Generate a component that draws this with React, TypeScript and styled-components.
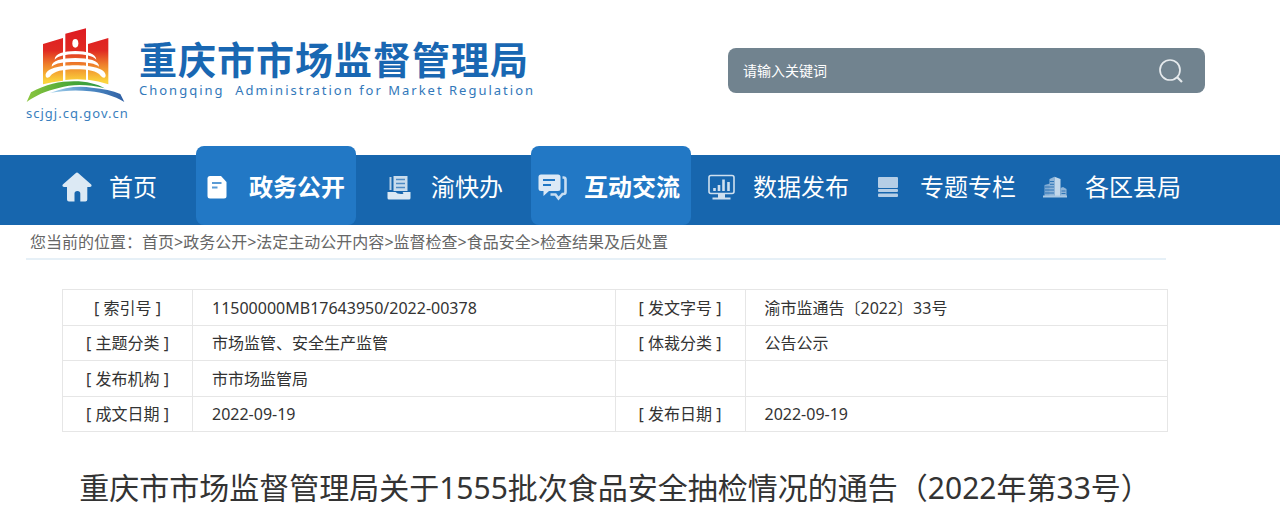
import React from "react";
import styled, { createGlobalStyle, css } from "styled-components";

const sans = `"Noto Sans", "Noto Sans CJK SC", sans-serif`;

const GlobalStyle = createGlobalStyle`
  * { box-sizing: border-box; }
  body {
    margin: 0;
    background: #fff;
    color: #333;
    font-family: ${sans};
    font-size: 16px;
    overflow-x: hidden;
  }
`;

const Header = styled.header`
  display: flex;
  justify-content: space-between;
  align-items: flex-start;
  min-height: 155px;
  padding: 28px 75px 24px 26px;
`;

const Brand = styled.a`
  display: flex;
  gap: 12px;
  color: #1967b2;
  text-decoration: none;
`;

const Emblem = styled.div`
  display: flex;
  flex-direction: column;
  width: 101px;
`;

const SiteAddress = styled.span`
  font-size: 13px;
  line-height: 20px;
  letter-spacing: 1px;
  color: #3a7fbe;
  white-space: nowrap;
`;

const BrandText = styled.div`
  display: flex;
  flex-direction: column;
  padding-top: 8px;
`;

const BrandName = styled.span`
  font-size: 38px;
  line-height: 46px;
  font-weight: 700;
  letter-spacing: 1px;
  white-space: nowrap;
`;

const BrandEnglish = styled.span`
  font-size: 13px;
  line-height: 16px;
  letter-spacing: 2px;
  color: #3278ba;
  white-space: pre;
`;

const SearchForm = styled.form`
  display: flex;
  align-items: center;
  width: 477px;
  height: 45px;
  margin-top: 20px;
  padding: 0 21px 0 15px;
  border-radius: 8px;
  background: #71838f;
`;

const SearchInput = styled.input`
  flex: 1;
  min-width: 0;
  padding: 0;
  border: 0;
  outline: 0;
  background: transparent;
  color: #fff;
  font: 14px ${sans};
  &::placeholder {
    color: #fff;
    opacity: 1;
  }
`;

const SearchButton = styled.button`
  display: flex;
  padding: 0;
  border: 0;
  background: transparent;
  color: #e6eaed;
  cursor: pointer;
`;

const NavBar = styled.nav`
  background: #1766ae;
`;

const NavList = styled.ul`
  display: grid;
  grid-template-columns: 140fr 182fr 153fr 169fr 167fr 168fr 245fr;
  margin: 0;
  padding: 0 0 0 56px;
  list-style: none;
`;

const NavItem = styled.li`
  display: flex;
`;

const NavLink = styled.a<{ $active?: boolean }>`
  display: flex;
  align-items: center;
  gap: 17px;
  height: 79px;
  margin-top: -9px;
  padding: 9px 8px 6px 6px;
  border-radius: 8px;
  color: #fff;
  font-size: 24px;
  text-decoration: none;
  white-space: nowrap;
  ${(p) =>
    p.$active &&
    css`
      background: #2278c5;
      font-weight: 700;
      padding-right: 11px;
    `}
`;

const IconSlot = styled.span<{ $narrow?: boolean }>`
  display: flex;
  justify-content: center;
  width: ${(p) => (p.$narrow ? "27px" : "30px")};
`;

const NavLabel = styled.span`
  padding-bottom: 4px;
`;

const Breadcrumb = styled.nav`
  margin: 0 114px 0 26px;
  padding: 5px 4px 4px;
  border-bottom: 2px solid #e6f0f7;
  color: #666;
  line-height: 24px;
  white-space: nowrap;
`;

const CrumbLink = styled.a`
  color: inherit;
  text-decoration: none;
`;

const Article = styled.main`
  margin: 29px 112px 0 62px;
`;

const InfoTable = styled.table`
  width: 100%;
  height: 143px;
  table-layout: fixed;
  border-collapse: collapse;
`;

const LabelCol = styled.col`
  width: 130px;
`;

const cell = css`
  height: 35px;
  border: 1px solid #e6e6e6;
  line-height: 24px;
  font-weight: 400;
`;

const LabelCell = styled.th`
  ${cell}
  padding: 1px 0 0;
  text-align: center;
`;

const ValueCell = styled.td`
  ${cell}
  padding: 1px 19px 0;
`;

const Title = styled.h1`
  display: flex;
  justify-content: center;
  margin: 34px 0 0;
  font-size: 30px;
  line-height: 44px;
  font-weight: 400;
  white-space: nowrap;
`;

const LogoMark = () => (
  <svg width="100" height="75" viewBox="48 24 300 225" aria-hidden="true">
    <defs>
      <linearGradient id="tower" gradientUnits="userSpaceOnUse" x1="0" y1="25" x2="0" y2="192">
        <stop offset="0" stopColor="#de1b22" />
        <stop offset="0.4" stopColor="#e02a22" />
        <stop offset="0.65" stopColor="#ee7f2b" />
        <stop offset="0.95" stopColor="#fbd33c" />
      </linearGradient>
      <linearGradient id="hill" x1="0" y1="0" x2="1" y2="0">
        <stop offset="0" stopColor="#8cc63f" />
        <stop offset="0.6" stopColor="#46a536" />
        <stop offset="1" stopColor="#2e9a4a" />
      </linearGradient>
      <linearGradient id="river" x1="0" y1="0" x2="1" y2="0">
        <stop offset="0" stopColor="#a9d5ee" />
        <stop offset="0.5" stopColor="#4f8dc6" />
        <stop offset="1" stopColor="#2f5fa3" />
      </linearGradient>
    </defs>
    <g fill="url(#tower)">
      <path d="M99 72 159 54V182Q126 185 99 193Z" />
      <path d="M166 41 228 25V179Q197 176 166 180Z" />
      <path d="M234 72 295 54V193Q265 182 234 179Z" />
    </g>
    <ellipse cx="196" cy="70" rx="9" ry="13" fill="#fff" />
    <g fill="#fff">
      <path d="M134 119C134 101 162 93 196 93S258 101 259 119C247 107 226 103 196 103S146 107 134 119Z" />
      <path d="M125 140C124 122 156 114 196 114S268 122 267 140C257 131 232 126 196 126S137 129 125 140Z" />
      <path d="M107 167C106 146 148 136 196 136S288 146 287 167C285 176 278 174 272 167C262 153 234 148 196 148S132 154 121 168C116 175 108 175 107 167Z" />
    </g>
    <path d="M50 246 63 217C108 193 148 184 192 184C230 184 262 192 284 205C232 192 186 192 146 204C107 213 78 226 50 246Z" fill="url(#hill)" />
    <path d="M120 219C166 201 206 197 246 203C280 206 308 212 331 222L343 246C312 228 277 217 240 214C202 209 160 211 120 219Z" fill="url(#river)" />
  </svg>
);

const SearchIcon = () => (
  <svg width="26" height="26" viewBox="0 0 26 26" fill="none" stroke="currentColor" strokeWidth="1.7" aria-hidden="true">
    <circle cx="12" cy="12" r="10" />
    <path d="M19 19 24 24" strokeWidth="2.2" />
  </svg>
);

const HomeIcon = () => (
  <svg width="30" height="30" viewBox="0 0 30 30" fill="#dce9f4" aria-hidden="true">
    <path d="M13.6 1.2Q15 0 16.4 1.2L29.2 12.4Q30.4 14.6 28 15H25.3V27.5Q25.3 29.5 23.3 29.5H18.3V21.5Q18.3 19 15.4 19T12.5 21.5V29.5H7Q5 29.5 5 27.5V15H2Q-.4 14.6.8 12.4Z" />
  </svg>
);

const DocumentIcon = () => (
  <svg width="20" height="24" viewBox="0 0 20 24" aria-hidden="true">
    <path d="M3 1H14L19.500 7V21Q19.500 23.500 17 23.500H3Q.5 23.500.5 21V3.500Q.5 1 3 1Z" fill="#fff" />
    <path d="M5 8H14.500M5 12.500H10.500" stroke="#5a9bd5" strokeWidth="1.8" />
  </svg>
);

const ServiceIcon = () => (
  <svg width="24" height="26" viewBox="0 0 24 26" aria-hidden="true">
    <path d="M3.500 3V16" stroke="#b9d1e7" strokeWidth="2" />
    <path d="M6.500 2H20.500V17H6.500Z" fill="#c9dced" />
    <path d="M9 5.500H18M9 9.500H18M9 13.500H18" stroke="#4f8bc4" strokeWidth="1.300" />
    <path d="M.5 18H8.500Q10 20 14 20T15.500 18H23.500V24Q23.500 25.500 22 25.500H2Q.5 25.500 .5 24Z" fill="#dce9f4" />
  </svg>
);

const ChatIcon = () => (
  <svg width="29" height="28" viewBox="0 0 29 28" aria-hidden="true">
    <path d="M24.500 4.500H25.500Q27.500 4.500 27.500 6.500V19Q27.500 21 25.500 21H24.500L20.500 25.500 17.500 21.500H12.500" fill="none" stroke="#c8def2" strokeWidth="2.600" />
    <path d="M3 1.500H20Q22.500 1.500 22.500 4V15.500Q22.500 18 20 18H11L5.500 23V18H3Q.5 18 .5 15.500V4Q.5 1.500 3 1.500Z" fill="#dce9f6" />
    <path d="M5 7H17M5 12H13" stroke="#2278c5" strokeWidth="1.800" />
  </svg>
);

const ChartIcon = () => (
  <svg width="27" height="26" viewBox="0 0 27 26" aria-hidden="true">
    <rect x="1" y="1.500" width="25" height="18" rx="2" fill="none" stroke="#cfe0ef" strokeWidth="1.600" />
    <path d="M6.500 17V14M11 17V11M15.500 17V5.500M20.500 17V8" stroke="#cfe0ef" strokeWidth="2.600" />
    <path d="M10 20H17V23.500H22.500V25.500H4.500V23.500H10Z" fill="#cfe0ef" />
  </svg>
);

const StackIcon = () => (
  <svg width="20" height="22" viewBox="0 0 20 22" fill="#b5cee6" aria-hidden="true">
    <rect y="1" width="20" height="11" rx="1" />
    <rect y="13" width="20" height="3" rx="1" />
    <rect y="17.500" width="20" height="3.500" rx="1" />
  </svg>
);

const BuildingIcon = () => (
  <svg width="24" height="22" viewBox="0 0 24 22" aria-hidden="true">
    <path d="M1.500 9 7 7.500V20H1.500Z" fill="#7faad3" />
    <path d="M6.500 3 11.500.8V20H6.500Z" fill="#8fb5d9" />
    <path d="M11.500.8 17.500 3V20H11.500Z" fill="#c3d8eb" />
    <path d="M17.500 12 20 11 23.500 13V20H17.500Z" fill="#8fb5d9" />
    <path d="M2 11H11M2 14H11M2 17H11M7 5.500H11M7 8.300H11M18.500 15H22.500M18.500 17.500H22.500" stroke="#1766ae" strokeWidth=".8" />
    <path d="M0 19.500H24V21.500H0Z" fill="#aac8e3" />
  </svg>
);

const navItems = [
  { label: "首页", Icon: HomeIcon },
  { label: "政务公开", Icon: DocumentIcon, active: true },
  { label: "渝快办", Icon: ServiceIcon },
  { label: "互动交流", Icon: ChatIcon, active: true },
  { label: "数据发布", Icon: ChartIcon },
  { label: "专题专栏", Icon: StackIcon },
  { label: "各区县局", Icon: BuildingIcon, narrow: true },
];

const crumbs = ["首页", "政务公开", "法定主动公开内容", "监督检查", "食品安全", "检查结果及后处置"];

const infoRows = [
  ["[ 索引号 ]", "11500000MB17643950/2022-00378", "[ 发文字号 ]", "渝市监通告〔2022〕33号"],
  ["[ 主题分类 ]", "市场监管、安全生产监管", "[ 体裁分类 ]", "公告公示"],
  ["[ 发布机构 ]", "市市场监管局", "", ""],
  ["[ 成文日期 ]", "2022-09-19", "[ 发布日期 ]", "2022-09-19"],
];

export default function App() {
  return (
    <>
      <GlobalStyle />
      <Header>
        <Brand href="#">
          <Emblem>
            <LogoMark />
            <SiteAddress>scjgj.cq.gov.cn</SiteAddress>
          </Emblem>
          <BrandText>
            <BrandName>重庆市市场监督管理局</BrandName>
            <BrandEnglish>{"Chongqing  Administration for Market Regulation"}</BrandEnglish>
          </BrandText>
        </Brand>
        <SearchForm role="search" onSubmit={(e) => e.preventDefault()}>
          <SearchInput type="text" placeholder="请输入关键词" aria-label="请输入关键词" />
          <SearchButton type="submit" aria-label="搜索">
            <SearchIcon />
          </SearchButton>
        </SearchForm>
      </Header>
      <NavBar>
        <NavList>
          {navItems.map(({ label, Icon, active, narrow }) => (
            <NavItem key={label}>
              <NavLink href="#" $active={active}>
                <IconSlot $narrow={narrow}>
                  <Icon />
                </IconSlot>
                <NavLabel>{label}</NavLabel>
              </NavLink>
            </NavItem>
          ))}
        </NavList>
      </NavBar>
      <Breadcrumb>
        您当前的位置：
        {crumbs.map((name, i) => (
          <React.Fragment key={name}>
            {i > 0 && ">"}
            <CrumbLink href="#">{name}</CrumbLink>
          </React.Fragment>
        ))}
      </Breadcrumb>
      <Article>
        <InfoTable>
          <colgroup>
            <LabelCol />
            <col />
            <LabelCol />
            <col />
          </colgroup>
          <tbody>
            {infoRows.map(([labelA, valueA, labelB, valueB]) => (
              <tr key={labelA}>
                <LabelCell scope="row">{labelA}</LabelCell>
                <ValueCell>{valueA}</ValueCell>
                {labelB ? <LabelCell scope="row">{labelB}</LabelCell> : <ValueCell />}
                <ValueCell>{valueB}</ValueCell>
              </tr>
            ))}
          </tbody>
        </InfoTable>
        <Title>重庆市市场监督管理局关于1555批次食品安全抽检情况的通告（2022年第33号）</Title>
      </Article>
    </>
  );
}
